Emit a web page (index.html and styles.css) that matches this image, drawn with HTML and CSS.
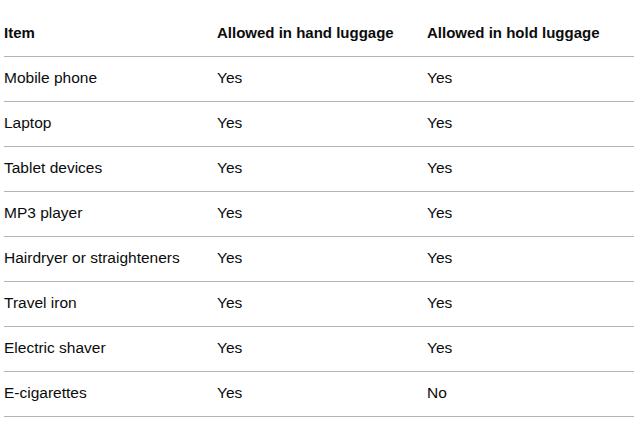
FILE: index.html
```html
<!DOCTYPE html>
<html lang="en">
<head>
<meta charset="utf-8">
<title>Luggage</title>
<link rel="stylesheet" href="styles.css">
</head>
<body>
<table class="table">
  <thead>
    <tr class="row">
      <th class="head c1">Item</th>
      <th class="head c2">Allowed in hand luggage</th>
      <th class="head c3">Allowed in hold luggage</th>
    </tr>
  </thead>
  <tbody>
    <tr class="row"><td class="cell">Mobile phone</td><td class="cell">Yes</td><td class="cell">Yes</td></tr>
    <tr class="row"><td class="cell">Laptop</td><td class="cell">Yes</td><td class="cell">Yes</td></tr>
    <tr class="row"><td class="cell">Tablet devices</td><td class="cell">Yes</td><td class="cell">Yes</td></tr>
    <tr class="row"><td class="cell">MP3 player</td><td class="cell">Yes</td><td class="cell">Yes</td></tr>
    <tr class="row"><td class="cell">Hairdryer or straighteners</td><td class="cell">Yes</td><td class="cell">Yes</td></tr>
    <tr class="row"><td class="cell">Travel iron</td><td class="cell">Yes</td><td class="cell">Yes</td></tr>
    <tr class="row"><td class="cell">Electric shaver</td><td class="cell">Yes</td><td class="cell">Yes</td></tr>
    <tr class="row"><td class="cell">E-cigarettes</td><td class="cell">Yes</td><td class="cell">No</td></tr>
  </tbody>
</table>
</body>
</html>
```

FILE: styles.css
```css
html, body {
  margin: 0;
  background: #ffffff;
}
body {
  padding: 12px 7px 0 4px;
  font-family: "Liberation Sans", Arial, sans-serif;
  color: #0b0c0c;
}
.table {
  width: 630px;
  border-collapse: collapse;
  border-spacing: 0;
  font-size: 15.5px;
  line-height: 24px;
  table-layout: fixed;
}
.c1 { width: 213px; }
.c2 { width: 210px; }
.c3 { width: 207px; }
.head,
.cell {
  box-sizing: border-box;
  padding: 9px 20px 11px 0;
  text-align: left;
  vertical-align: top;
  border-bottom: 1px solid #b1b4b6;
}
.head {
  font-weight: 700;
  font-size: 15px;
}
.cell {
  font-weight: 400;
}
```
